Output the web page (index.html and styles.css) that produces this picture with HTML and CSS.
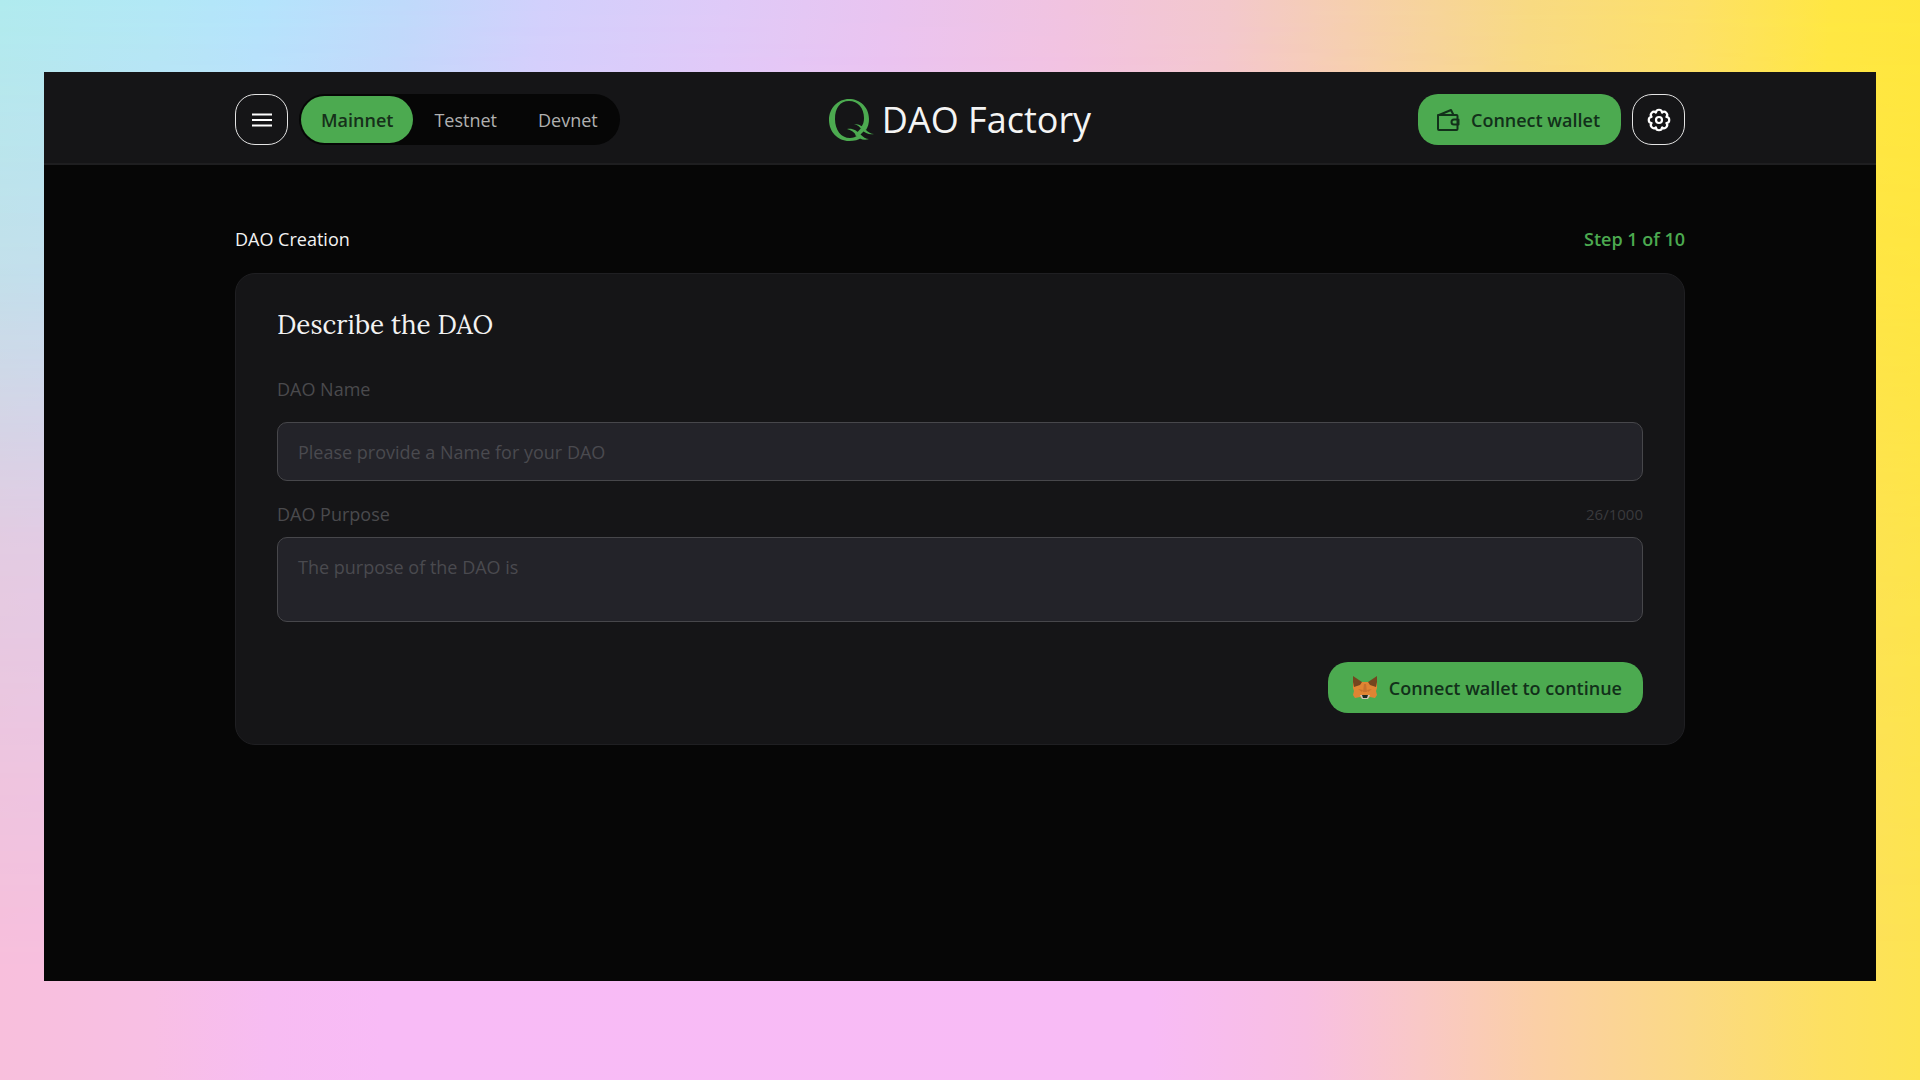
FILE: index.html
```html
<!DOCTYPE html>
<html lang="en">
<head>
<meta charset="utf-8">
<meta name="viewport" content="width=device-width, initial-scale=1">
<title>DAO Factory</title>
<link rel="stylesheet" href="styles.css">
</head>
<body>
<div class="app">
  <header class="header">
    <div class="container header-row">
      <div class="header-start">
        <button class="icon-button" type="button" aria-label="Menu">
          <svg width="20" height="14" viewBox="0 0 20 14" fill="none" stroke="currentColor" stroke-width="2" aria-hidden="true"><path d="M0 1.500h20M0 7h20M0 12.500h20"/></svg>
        </button>
        <nav class="networks" aria-label="Network">
          <button class="network network-active" type="button">Mainnet</button>
          <button class="network" type="button">Testnet</button>
          <button class="network" type="button">Devnet</button>
        </nav>
      </div>
      <a class="brand" href="#">
        <svg width="46" height="44" viewBox="0 0 46 44" fill="currentColor" aria-hidden="true">
          <path fill-rule="evenodd" d="M20 1C31 1 40 9 40 21c0 4-1 8-3 11l-5-3c2-2 3-5 3-9C35 10 29 3 20 3S6 10 6 21s6 19 15 19c3 0 6-1 8-3l4 2c-3 3-8 4-13 4C9 43 0 34 0 22S9 1 20 1Z"/>
          <path d="M25 26c6 0 9 3 12 6 2 2 5 4 8 4-5 1-9-1-12-4-2-3-4-5-8-6Z"/>
          <path d="M18 31c6-1 10 2 13 5 3 3 6 5 9 5-5 2-10 0-13-4-2-3-5-5-9-6Z"/>
          <path d="m33 29 4 2-8 8-3-2Z"/>
        </svg>
        <span>DAO Factory</span>
      </a>
      <div class="header-end">
        <button class="button" type="button">
          <svg width="24" height="24" viewBox="0 0 24 24" fill="none" stroke="currentColor" stroke-width="2" stroke-linejoin="round" aria-hidden="true"><path d="M2 7h18.500a1 1 0 0 1 1 1v13a1 1 0 0 1-1 1H3a1 1 0 0 1-1-1V7ZM3 7l12-5 2.500 5M22.500 11.500h-4.500a2.500 2.500 0 0 0 0 5h4.500Z"/></svg>
          Connect wallet
        </button>
        <button class="icon-button" type="button" aria-label="Settings">
          <svg width="24" height="24" viewBox="0 0 24 24" fill="none" stroke="currentColor" stroke-width="2.2" stroke-linejoin="round" aria-hidden="true"><circle cx="12" cy="12" r="3"/><path d="M19.400 8.900C23.200 9.200 23.200 14.800 19.400 15.100C21.900 17.900 17.900 21.900 15.100 19.400C14.800 23.200 9.200 23.200 8.900 19.400C6.100 21.900 2.100 17.900 4.600 15.100C.8 14.800 .8 9.200 4.600 8.900C2.100 6.100 6.100 2.100 8.900 4.600C9.200 .8 14.800 .8 15.100 4.600C17.900 2.100 21.900 6.100 19.400 8.900Z"/></svg>
        </button>
      </div>
    </div>
  </header>
  <main class="container main">
    <div class="progress">
      <span>DAO Creation</span>
      <span class="step">Step 1 of 10</span>
    </div>
    <form class="card">
      <h1 class="title">Describe the DAO</h1>
      <label class="label" for="dao-name">DAO Name</label>
      <input class="field" id="dao-name" type="text" placeholder="Please provide a Name for your DAO">
      <div class="label-row">
        <label class="label" for="dao-purpose">DAO Purpose</label>
        <span class="counter">26/1000</span>
      </div>
      <textarea class="field field-area" id="dao-purpose" placeholder="The purpose of the DAO is"></textarea>
      <button class="button submit" type="button">
        <svg width="26" height="24" viewBox="0 0 26 24" aria-hidden="true">
          <path fill="#e08533" d="M1 1l8 5h8l8-5v11l-1 3 1 4-2 3-5-1-3 2h-4l-3-2-5 1-2-3 1-4-1-3Z"/>
          <path fill="#74451f" d="M1 0l9 6-2 3-6 2-1-5ZM25 0l-9 6 2 3 6 2 1-5Z"/>
          <path fill="#b8662a" d="M6 13l5 1-1 2ZM20 13l-5 1 1 2ZM12 8h2l1 8h-4Z" opacity=".6"/>
          <path fill="#cfc5b8" d="M8 19l2 4h6l2-4Z"/>
          <path fill="#1d2a24" d="M10 19h6l-1 3h-4Z"/>
        </svg>
        Connect wallet to continue
      </button>
    </form>
  </main>
</div>
</body>
</html>
```
FILE: styles.css
```css
* { box-sizing: border-box; }

body {
  margin: 0;
  min-height: 100vh;
  padding: 72px 44px 99px;
  display: flex;
  font: 18px/24px "Open Sans", "Noto Sans", sans-serif;
  color: #f2f2f2;
  background: linear-gradient(90deg, #f8bfdc 0, #f8bfe4 8%, #f7bcf2 14%, #f8bbf6 20%, #f8bbf5 60%, #f8bfe2 68%, #f9c8c6 74%, #fbcfa6 80%, #fbd985 88%, #fde062 95%, #fde452 100%);
}

/* Cooler wash that fades out towards the foot of the page */
body::before {
  content: "";
  position: absolute;
  inset: 0;
  z-index: -1;
  background: linear-gradient(95deg, #b0ebee 0, #b2e8f6 8%, #b4e4fc 13%, #bfdafb 20%, #d2d0fc 27%, #dfcaf8 36%, #e9c4f0 44%, #f1c3e0 53%, #f3c8cc 61%, #f6cfae 67%, #f8da82 76%, #fde068 84%, #ffe742 91%, #ffe636 100%);
  mask-image: linear-gradient(#000 0, rgba(0, 0, 0, .75) 25%, rgba(0, 0, 0, .3) 50%, transparent 90%);
}

button, input, textarea { font: inherit; }

.app {
  flex: 1;
  background: #060606;
}

.header {
  padding: 22px 0 18px;
  background: #151517;
  border-bottom: 2px solid #1e1e20;
}

.container {
  width: 100%;
  max-width: 1530px;
  margin: 0 auto;
  padding: 0 40px;
}

.header-row {
  display: grid;
  grid-template-columns: 1fr auto 1fr;
  align-items: center;
}

.header-start,
.header-end {
  display: flex;
  align-items: center;
  gap: 11px;
}

.header-end { justify-content: flex-end; }

.icon-button {
  width: 53px;
  height: 51px;
  padding: 0;
  display: grid;
  place-items: center;
  color: #fff;
  background: none;
  border: 1px solid #e4e4e4;
  border-radius: 20px;
}

.networks {
  display: flex;
  gap: 1px;
  padding: 2px;
  height: 51px;
  border-radius: 26px;
  background: #060606;
}

.network {
  padding: 0 20px;
  border: 0;
  border-radius: 24px;
  background: none;
  color: #b0b0b0;
}

.network-active {
  background: #4caa50;
  color: #16301a;
  font-weight: 600;
}

.brand {
  display: flex;
  align-items: center;
  gap: 7px;
  color: #4caa50;
  font-size: 36px;
  line-height: 44px;
  text-decoration: none;
}

.brand span { color: #f4f4f4; }

.button {
  height: 51px;
  padding: 0 21px 0 18px;
  display: flex;
  align-items: center;
  gap: 11px;
  border: 0;
  border-radius: 20px;
  background: #4caa50;
  color: #12301a;
  font-weight: 600;
}

.main { padding-top: 62px; }

.progress {
  display: flex;
  justify-content: space-between;
  margin-bottom: 22px;
}

.step {
  color: #4caa50;
  font-weight: 600;
}

.card {
  display: flex;
  flex-direction: column;
  padding: 31px 41px;
  border: 1px solid #1f1f22;
  border-radius: 20px;
  background: #151517;
}

.title {
  margin: 0 0 32px;
  font: 400 26px/40px "Lora", "Liberation Serif", serif;
}

.label { color: #4a4a4d; }

.field {
  width: 100%;
  height: 59px;
  margin: 21px 0;
  padding: 0 20px;
  border: 1px solid #47474b;
  border-radius: 10px;
  background: #232329;
  color: #f2f2f2;
}

.field::placeholder {
  color: #4a4a4f;
  opacity: 1;
}

.label-row {
  display: flex;
  justify-content: space-between;
}

.counter {
  color: #3a3a3d;
  font-size: 15px;
}

.field-area {
  display: block;
  height: 85px;
  margin: 11px 0 40px;
  padding: 17px 20px;
  resize: none;
}

.submit {
  align-self: flex-end;
  padding-left: 24px;
}
```
